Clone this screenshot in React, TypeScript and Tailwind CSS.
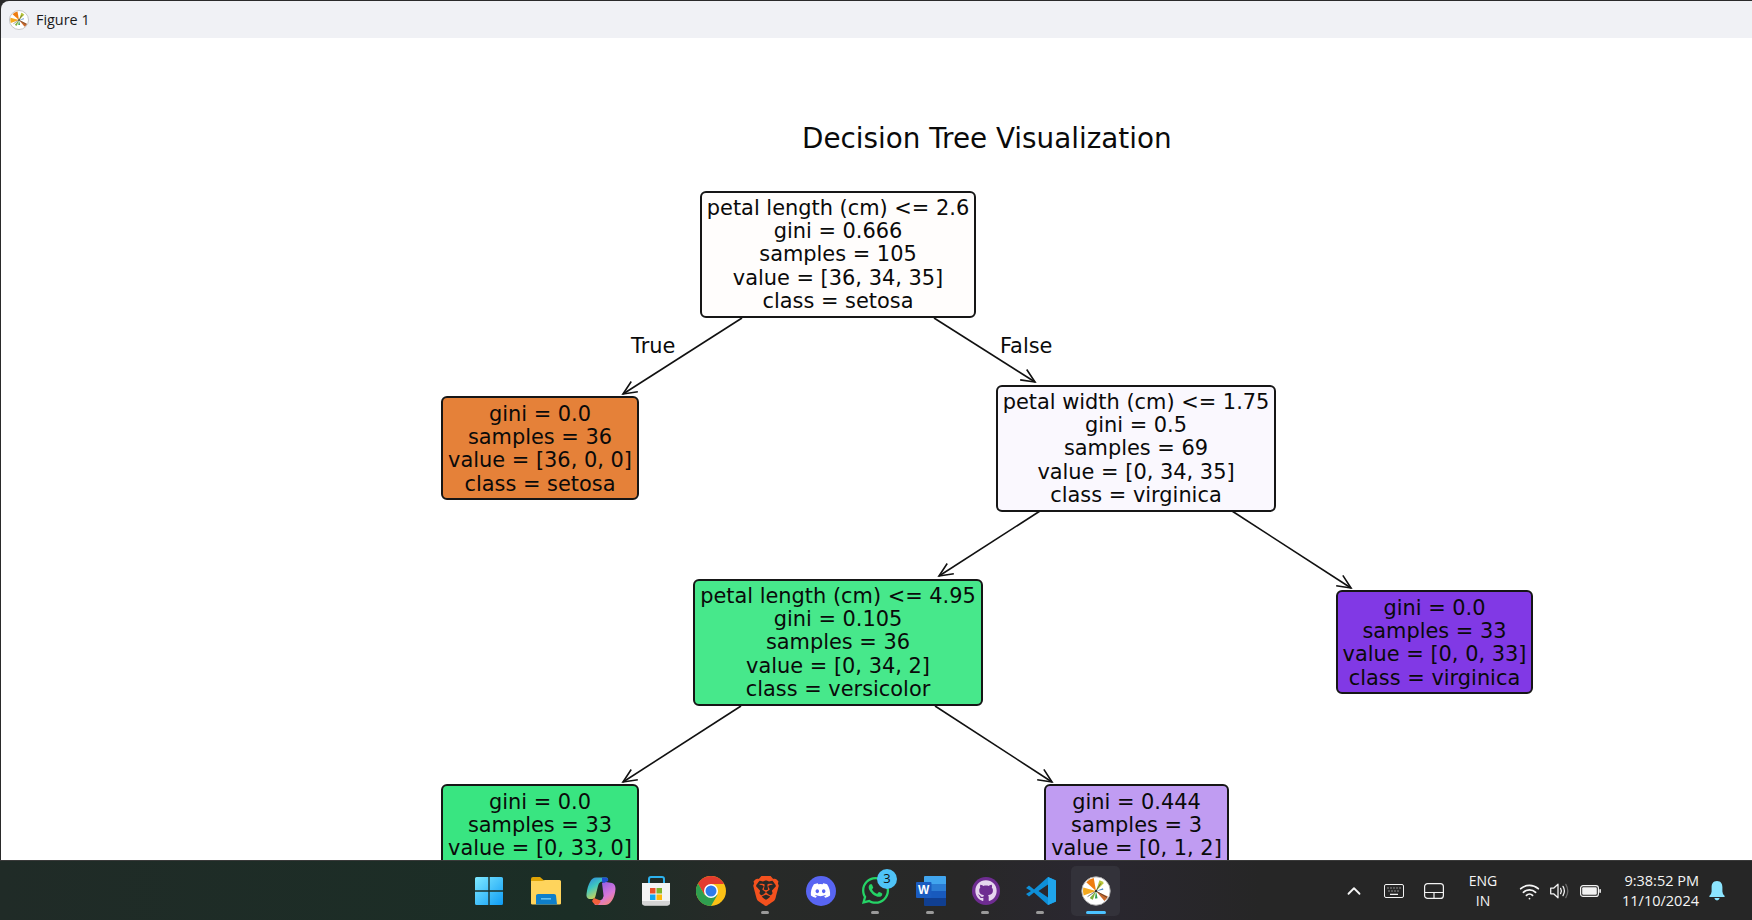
import React from 'react';
import { FaDiscord, FaGithub, FaWhatsapp } from 'react-icons/fa';
import { SiBrave } from 'react-icons/si';
import { ChevronUp, Wifi } from 'lucide-react';

type TreeNode = { id: string; box: string; lines: string[] };

const nodes: TreeNode[] = [
  { id: 'root', box: 'left-[699px] top-[153px] w-[276px] h-[127px] pt-[4px] bg-[#fffdfc]', lines: ['petal length (cm) <= 2.6', 'gini = 0.666', 'samples = 105', 'value = [36, 34, 35]', 'class = setosa'] },
  { id: 'setosa', box: 'left-[440px] top-[358px] w-[198px] h-[104px] pt-[5px] bg-[#e58139]', lines: ['gini = 0.0', 'samples = 36', 'value = [36, 0, 0]', 'class = setosa'] },
  { id: 'width', box: 'left-[995px] top-[347px] w-[280px] h-[127px] pt-[4px] bg-[#faf8fe]', lines: ['petal width (cm) <= 1.75', 'gini = 0.5', 'samples = 69', 'value = [0, 34, 35]', 'class = virginica'] },
  { id: 'length', box: 'left-[692px] top-[541px] w-[290px] h-[127px] pt-[4px] bg-[#47e88b]', lines: ['petal length (cm) <= 4.95', 'gini = 0.105', 'samples = 36', 'value = [0, 34, 2]', 'class = versicolor'] },
  { id: 'virginica', box: 'left-[1335px] top-[552px] w-[197px] h-[104px] pt-[5px] bg-[#8139e5]', lines: ['gini = 0.0', 'samples = 33', 'value = [0, 0, 33]', 'class = virginica'] },
  { id: 'versicolor', box: 'left-[440px] top-[746px] w-[198px] h-[104px] pt-[5px] bg-[#39e581]', lines: ['gini = 0.0', 'samples = 33', 'value = [0, 33, 0]'] },
  { id: 'mixed', box: 'left-[1043px] top-[746px] w-[185px] h-[104px] pt-[5px] bg-[#c09cf2]', lines: ['gini = 0.444', 'samples = 3', 'value = [0, 1, 2]'] },
];

// start and arrow tip of each edge, in canvas coordinates
const edges = [
  [741, 280, 622, 356],
  [933, 280, 1034, 344],
  [1039, 473, 938, 538],
  [1231, 473, 1350, 550],
  [740, 668, 622, 744],
  [934, 668, 1051, 744],
];

const arrowHead = (x1: number, y1: number, x2: number, y2: number) => {
  const a = Math.atan2(y1 - y2, x1 - x2);
  const p = (d: number) => `${x2 + 15 * Math.cos(a + d)} ${y2 + 15 * Math.sin(a + d)}`;
  return `M${p(0.42)} L${x2} ${y2} L${p(-0.42)}`;
};

const wedge = (from: number, to: number, r: number) => {
  const rad = (d: number) => (d * Math.PI) / 180;
  return `M16 16 L${16 + r * Math.cos(rad(from))} ${16 - r * Math.sin(rad(from))} A${r} ${r} 0 0 0 ${16 + r * Math.cos(rad(to))} ${16 - r * Math.sin(rad(to))} Z`;
};

const MatplotlibLogo = ({ className }: { className: string }) => (
  <svg viewBox="0 0 32 32" className={className}>
    <circle cx="16" cy="16" r="15.2" fill="#fff" stroke="#a8a8a8" strokeWidth="1" />
    <path d={wedge(100, 138, 14)} fill="#ee7d11" />
    <path d={wedge(165, 200, 14)} fill="#f4a91f" />
    <path d={wedge(228, 250, 10)} fill="#7fb13b" />
    <path d={wedge(262, 282, 8)} fill="#2f9c4f" />
    <path d={wedge(45, 72, 12)} fill="#b8c63a" />
    <path d={wedge(310, 335, 14)} fill="#c8682b" />
    <path d={wedge(10, 22, 8)} fill="#4a86c5" />
    <path d="M16 16 L28 23 M16 16 L21 8 M16 16 L7 22" stroke="#333" strokeWidth="0.7" />
    <circle cx="16" cy="16" r="1.2" fill="#222" />
  </svg>
);

const StartIcon = () => (
  <svg viewBox="0 0 30 30" className="w-[30px] h-[30px]">
    <defs>
      <linearGradient id="win" x1="0" y1="0" x2="1" y2="1">
        <stop offset="0" stopColor="#7fe9ff" />
        <stop offset="1" stopColor="#0e9cf5" />
      </linearGradient>
    </defs>
    <path d="M1 2.5 Q1 1 2.5 1 H14.3 V14.3 H1 Z M15.7 1 H27.5 Q29 1 29 2.5 V14.3 H15.7 Z M1 15.7 H14.3 V29 H2.5 Q1 29 1 27.5 Z M15.7 15.7 H29 V27.5 Q29 29 27.5 29 H15.7 Z" fill="url(#win)" />
  </svg>
);

const ExplorerIcon = () => (
  <svg viewBox="0 0 30 30" className="w-[30px] h-[30px]">
    <path d="M0 3 Q0 1 2 1 H9 L13 4.5 H28 Q30 4.5 30 6 V12 H0 Z" fill="#dfa406" />
    <path d="M0 5 H11 L14 4 H28.5 Q30 4 30 5.5 V27.5 Q30 28.5 28.5 28.5 H1.5 Q0 28.5 0 27.5 Z" fill="#ffd45c" />
    <path d="M5 19.5 Q5 18 7 18 H23 Q25 18 25 19.5 L26 28.5 H5 Z" fill="#0f7fca" />
    <rect x="10" y="22" width="10" height="1.6" fill="#64c0f0" />
  </svg>
);

const CopilotIcon = () => (
  <svg viewBox="0 0 30 30" className="w-[30px] h-[30px]">
    <defs>
      <linearGradient id="copA" x1="0" y1="0" x2="0.6" y2="1">
        <stop offset="0" stopColor="#2f7fe0" />
        <stop offset="0.45" stopColor="#3dc8c0" />
        <stop offset="1" stopColor="#f5d43c" />
      </linearGradient>
      <linearGradient id="copB" x1="0.2" y1="0" x2="0.8" y2="1">
        <stop offset="0" stopColor="#8a5be8" />
        <stop offset="0.6" stopColor="#d878d8" />
        <stop offset="1" stopColor="#f88a70" />
      </linearGradient>
    </defs>
    <path d="M10 1.5 H20 Q23 1.5 21 4 L14.5 6 Q12.5 7 12 10 L9.5 20 Q9 23 6 23 H3 Q0 22 0.5 18 Q1.5 10 4 6 Q6 1.5 10 1.5 Z" fill="url(#copA)" />
    <path d="M16 7 Q17.5 5.5 20 6 L26 7 Q29.5 8 29.5 13 Q29 20 26 24.5 Q23 29 19 29 H10 Q7 28.5 9.5 26 L15 24 Q17 23 17.6 20 Z" fill="url(#copB)" />
    <path d="M8 22 L13 24 Q15 24 14.5 26 L12 29 Q8 29 6 25 Z" fill="#f4603c" />
    <path d="M16 1.5 H20 Q23 2 22 5 L18 7 L16 6 Z" fill="#1f4fd0" />
  </svg>
);

const StoreIcon = () => (
  <svg viewBox="0 0 30 30" className="w-[30px] h-[30px]">
    <path d="M8 7 V3 Q8 1 10 1 H21 Q23 1 23 3 V7" fill="none" stroke="#2cb2ee" strokeWidth="2" />
    <path d="M1 7 H29 V26 Q29 29.5 26 29.5 H4 Q1 29.5 1 26 Z" fill="#f4f4f4" />
    <path d="M1 25 H29 V26 Q29 29.5 26 29.5 H4 Q1 29.5 1 26 Z" fill="#d4d4d4" />
    <rect x="9" y="12" width="5.5" height="5.5" fill="#e8502a" />
    <rect x="15.5" y="12" width="5.5" height="5.5" fill="#7fb52a" />
    <rect x="9" y="18.5" width="5.5" height="5.5" fill="#10a5ef" />
    <rect x="15.5" y="18.5" width="5.5" height="5.5" fill="#fbb80c" />
  </svg>
);

const ChromeIcon = () => (
  <svg viewBox="0 0 30 30" className="w-[30px] h-[30px]">
    <circle cx="15" cy="15" r="15" fill="#fbc116" />
    <path d="M15 0 A15 15 0 0 0 2 7.5 L8.5 18.8 L15 8 H28 A15 15 0 0 0 15 0 Z" fill="#e33b2e" />
    <path d="M2 7.5 A15 15 0 0 0 15 30 L21.5 18.8 L8.5 18.8 Z" fill="#2f9e4f" />
    <circle cx="15" cy="15" r="7" fill="#fff" />
    <circle cx="15" cy="15" r="5.5" fill="#2f7bea" />
  </svg>
);

const WordIcon = () => (
  <svg viewBox="0 0 30 30" className="w-[30px] h-[30px]">
    <path d="M8 1 Q8 0 9 0 H29 Q30 0 30 1 V8 H8 Z" fill="#41a5ee" />
    <rect x="8" y="8" width="22" height="7" fill="#2b7cd3" />
    <rect x="8" y="15" width="22" height="7" fill="#185abd" />
    <path d="M8 22 H30 V29 Q30 30 29 30 H9 Q8 30 8 29 Z" fill="#103f91" />
    <rect x="0" y="6" width="15.5" height="16" rx="1" fill="#1a5cc0" />
    <text x="7.7" y="18" textAnchor="middle" className="font-['Liberation_Sans',sans-serif] text-[12px] font-bold" fill="#fff">W</text>
  </svg>
);

const VsCodeIcon = () => (
  <svg viewBox="0 0 30 30" className="w-[30px] h-[30px]">
    <path d="M22 1 L30 4.5 V25.5 L22 29 L8 16.5 L3 20.5 L0 18 L5 15 L0 12 L3 9.5 L8 13.5 Z M22 8.5 L12.5 15 L22 21.5 Z" fill="#0e8fd8" />
    <path d="M22 1 L30 4.5 V25.5 L22 29 Z" fill="#1fa5ec" />
  </svg>
);

const Keyboard = () => (
  <svg viewBox="0 0 20 14" className="w-[20px] h-[14px]" fill="none" stroke="#f2f2f2">
    <rect x="0.5" y="0.5" width="19" height="13" rx="1.5" />
    <path d="M3.5 4h1M6.5 4h1M9.5 4h1M12.5 4h1M15.5 4h1M4.5 7h1M7.5 7h1M10.5 7h1M13.5 7h1M6 10.3h8" strokeWidth="1.2" />
  </svg>
);

const Touchpad = () => (
  <svg viewBox="0 0 20 16" className="w-[20px] h-[16px]" fill="none" stroke="#f2f2f2" strokeWidth="1.2">
    <rect x="0.6" y="0.6" width="18.8" height="14.8" rx="3" />
    <path d="M0.6 9.5 H19.4 M10 9.5 V15.4" />
  </svg>
);

const Speaker = () => (
  <svg viewBox="0 0 20 16" className="w-[20px] h-[16px]" fill="none" stroke="#f2f2f2" strokeWidth="1.3" strokeLinejoin="round">
    <path d="M0.7 5.2 H3.6 L8 1.2 V14.8 L3.6 10.8 H0.7 Z" />
    <path d="M10.6 5.4 Q12.2 8 10.6 10.6 M13 3.4 Q15.8 8 13 12.6" strokeLinecap="round" />
    <path d="M15.8 1.4 Q19.8 8 15.8 14.6" stroke="#6a6a6a" strokeLinecap="round" />
  </svg>
);

const BatteryIcon = () => (
  <svg viewBox="0 0 21 12" className="w-[21px] h-[12px]">
    <rect x="0.6" y="0.6" width="17.8" height="10.8" rx="2.5" fill="none" stroke="#f2f2f2" strokeWidth="1.2" />
    <rect x="2.2" y="2.2" width="14.6" height="7.6" rx="1.2" fill="#f2f2f2" />
    <rect x="19.3" y="4" width="1.6" height="4" rx="0.7" fill="#f2f2f2" />
  </svg>
);

const Bell = () => (
  <svg viewBox="0 0 16 20" className="w-[16px] h-[20px]" fill="#8ce5ff">
    <path d="M8 0 C4 0 2.6 3 2.6 6 V10.5 Q2.6 13 0.3 15 Q0 16 1 16 H15 Q16 16 15.7 15 Q13.4 13 13.4 10.5 V6 C13.4 3 12 0 8 0 Z" />
    <path d="M5.3 17 H10.7 Q10 19.4 8 19.4 Q6 19.4 5.3 17 Z" />
  </svg>
);

const TaskIcon = ({ pip, children }: { pip?: boolean; children: React.ReactNode }) => (
  <div className="relative flex items-center justify-center w-[55px] h-[50px]">
    {children}
    {pip && <span className="absolute bottom-[2px] left-[23px] w-[8px] h-[3px] rounded-full bg-[#9a9a9a]" />}
  </div>
);

export default function App() {
  return (
    <div className="flex flex-col w-[1752px] h-[920px] overflow-hidden bg-[#2a2a2a] pl-px pt-px font-['Open_Sans',sans-serif]">
      <div className="flex items-center gap-[7px] h-[37px] shrink-0 pl-[8px] rounded-tl-[8px] bg-[#f0f1f5] text-[#1a1a1a] text-[14.4px]">
        <MatplotlibLogo className="w-[20px] h-[20px]" />
        <span>Figure 1</span>
      </div>

      <div className="relative flex-1 overflow-hidden bg-white font-['DejaVu_Sans',sans-serif] text-[#0a0a0a]">
        <div className="absolute left-[801px] top-[81px] text-[27.8px] leading-[40px] whitespace-nowrap">Decision Tree Visualization</div>

        <svg className="absolute left-0 top-0 w-[1751px] h-[822px]" fill="none" stroke="#111" strokeWidth="1.6">
          {edges.map(([x1, y1, x2, y2]) => (
            <g key={`${x1}-${x2}`}>
              <path d={`M${x1} ${y1} L${x2} ${y2}`} />
              <path d={arrowHead(x1, y1, x2, y2)} />
            </g>
          ))}
        </svg>

        <span className="absolute left-[630px] top-[294px] text-[20.9px] leading-[28px]">True</span>
        <span className="absolute left-[999px] top-[294px] text-[20.9px] leading-[28px]">False</span>

        {nodes.map(node => (
          <div
            key={node.id}
            className={`absolute box-border flex flex-col items-center border-2 border-[#161616] rounded-[6px] text-[20.9px] leading-[23.2px] whitespace-nowrap ${node.box}`}
          >
            {node.lines.map(line => (
              <span key={line}>{line}</span>
            ))}
          </div>
        ))}
      </div>

      <div className="relative flex items-center h-[60px] shrink-0 -ml-px border-t border-[#3a3a3a] bg-[linear-gradient(90deg,#202b27_0%,#1b2e26_33%,#272a28_42%,#282828_55%,#2a2730_62%,#262626_72%)] text-[#f5f5f5]">
        <div className="flex items-center ml-[461px]">
          <div className="mr-[2px]"><TaskIcon><StartIcon /></TaskIcon></div>
          <TaskIcon><ExplorerIcon /></TaskIcon>
          <TaskIcon><CopilotIcon /></TaskIcon>
          <TaskIcon><StoreIcon /></TaskIcon>
          <TaskIcon><ChromeIcon /></TaskIcon>
          <TaskIcon pip><SiBrave className="w-[30px] h-[30px] text-[#f4511e]" /></TaskIcon>
          <TaskIcon>
            <span className="flex items-center justify-center w-[30px] h-[30px] rounded-full bg-[#5865f2]">
              <FaDiscord className="w-[21px] h-[21px] text-white" />
            </span>
          </TaskIcon>
          <TaskIcon pip>
            <FaWhatsapp className="w-[31px] h-[31px] text-[#25d366]" />
            <span className="absolute left-[29px] top-[3px] flex items-center justify-center w-[20px] h-[20px] rounded-full bg-[#4fc3f7] text-[13px] leading-none text-[#111]">3</span>
          </TaskIcon>
          <TaskIcon pip><WordIcon /></TaskIcon>
          <TaskIcon pip>
            <span className="flex items-center justify-center w-[28px] h-[28px] rounded-full bg-[#6e2c91]">
              <FaGithub className="w-[22px] h-[22px] text-[#e6d6ee]" />
            </span>
          </TaskIcon>
          <TaskIcon pip><VsCodeIcon /></TaskIcon>
          <div className="relative flex items-center justify-center w-[49px] h-[50px] ml-[3px] rounded-[5px] bg-[#33323a]">
            <MatplotlibLogo className="w-[30px] h-[30px]" />
            <span className="absolute bottom-[2px] left-[15px] w-[20px] h-[3px] rounded-full bg-[#4cc2ff]" />
          </div>
        </div>

        <div className="absolute right-[27px] top-0 h-[60px] flex items-center">
          <ChevronUp className="w-[22px] h-[22px] mr-[19px]" strokeWidth={2} />
          <span className="mr-[20px]"><Keyboard /></span>
          <span className="mr-[19px]"><Touchpad /></span>
          <div className="flex flex-col items-center w-[40px] mr-[16px] text-[14px] leading-[20px]">
            <span>ENG</span>
            <span>IN</span>
          </div>
          <Wifi className="w-[21px] h-[21px] mr-[10px]" strokeWidth={2} />
          <span className="mr-[10px]"><Speaker /></span>
          <span className="mr-[21px]"><BatteryIcon /></span>
          <div className="flex flex-col items-end mr-[10px] text-[14.5px] leading-[20px]">
            <span>9:38:52 PM</span>
            <span>11/10/2024</span>
          </div>
          <Bell />
        </div>
      </div>
    </div>
  );
}
